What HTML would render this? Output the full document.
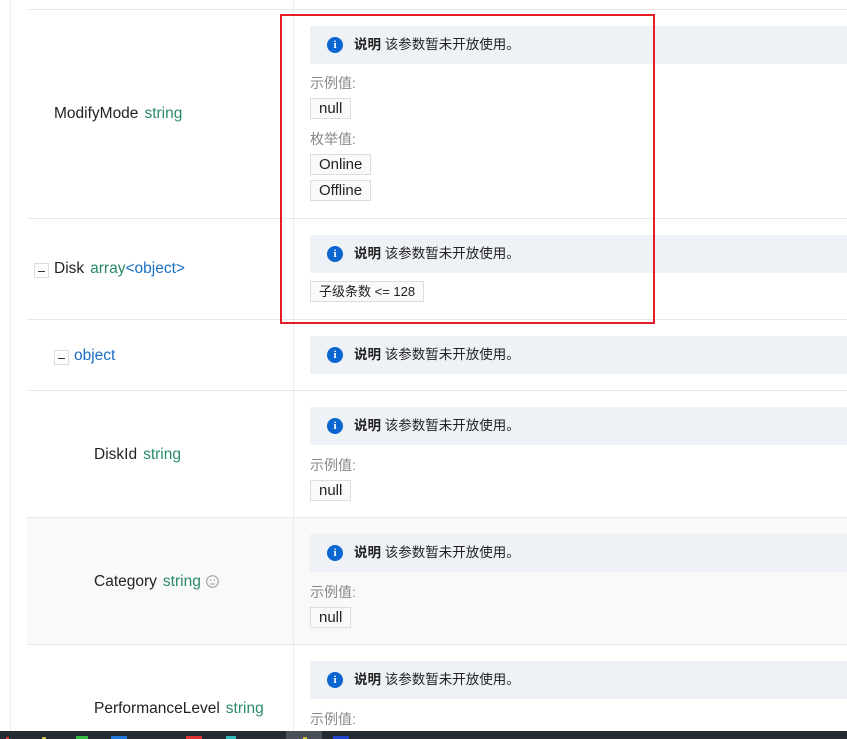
<!DOCTYPE html>
<html><head><meta charset="utf-8">
<style>
*{margin:0;padding:0;box-sizing:border-box}
body{width:847px;height:739px;overflow:hidden;background:#fff;position:relative;font-family:"Liberation Sans","Noto Sans CJK SC",sans-serif;color:#222;font-size:14px}
.a{position:absolute}
.hl{position:absolute;left:27px;right:0;height:1px;background:#e8e8e8}
.info{position:absolute;left:310px;right:0;height:38px;background:#eef1f6;font-size:13.5px;line-height:38px;padding-left:44px}
.info b{font-weight:bold;color:#222}
.info i{position:absolute;left:17px;top:11px;width:16px;height:16px;border-radius:50%;background:#0b66d0;color:#fff;font-style:normal;font-weight:bold;font-size:11px;line-height:16px;text-align:center;font-family:"Liberation Serif",serif}
.lbl{position:absolute;left:310px;font-size:14px;color:#888;line-height:16px}
.tag{position:absolute;left:310px;height:21px;border:1px solid #ddd;background:#fafafa;font-size:15px;line-height:19px;padding:0 8px;color:#222}
.nm{position:absolute;font-size:15.5px;line-height:18px;color:#222}
.nm span{color:#2a8a6a;margin-left:6px}
.nm .b{color:#1a6fc4}
.mb{position:absolute;width:15px;height:15px;border:1px solid #ddd;background:#fff}
.mb:after{content:"";position:absolute;left:3px;right:3px;top:7px;height:1px;background:#333}
</style></head><body>
<div class="a" style="left:10px;top:0;width:1px;height:731px;background:#ececec"></div>
<div class="a" style="left:27px;top:517px;right:0;height:127px;background:#f9f9f9"></div>
<div class="a" style="left:293px;top:0;width:1px;height:731px;background:#ececec"></div>
<div class="hl" style="top:9px"></div>
<div class="hl" style="top:218px"></div>
<div class="hl" style="top:319px"></div>
<div class="hl" style="top:390px"></div>
<div class="hl" style="top:517px"></div>
<div class="hl" style="top:644px"></div>

<div class="info" style="top:26px"><i>i</i><b>说明</b> 该参数暂未开放使用。</div>
<div class="lbl" style="top:75px">示例值:</div>
<div class="tag" style="top:98px">null</div>
<div class="lbl" style="top:131px">枚举值:</div>
<div class="tag" style="top:154px">Online</div>
<div class="tag" style="top:180px">Offline</div>
<div class="nm" style="left:54px;top:105px">ModifyMode<span>string</span></div>

<div class="info" style="top:235px"><i>i</i><b>说明</b> 该参数暂未开放使用。</div>
<div class="tag" style="top:281px;font-size:13px">子级条数 &lt;= 128</div>
<div class="mb" style="left:34px;top:263px"></div>
<div class="nm" style="left:54px;top:260px">Disk<span>array</span><span class="b" style="margin-left:0">&lt;object&gt;</span></div>

<div class="info" style="top:336px"><i>i</i><b>说明</b> 该参数暂未开放使用。</div>
<div class="mb" style="left:54px;top:350px"></div>
<div class="nm" style="left:74px;top:347px;color:#1a6fc4">object</div>

<div class="info" style="top:407px"><i>i</i><b>说明</b> 该参数暂未开放使用。</div>
<div class="lbl" style="top:457px">示例值:</div>
<div class="tag" style="top:480px">null</div>
<div class="nm" style="left:94px;top:446px">DiskId<span>string</span></div>

<div class="info" style="top:534px"><i>i</i><b>说明</b> 该参数暂未开放使用。</div>
<div class="lbl" style="top:584px">示例值:</div>
<div class="tag" style="top:607px">null</div>
<div class="nm" style="left:94px;top:573px">Category<span>string</span></div>
<svg class="a" style="left:206px;top:575px" width="13" height="13" viewBox="0 0 13 13"><circle cx="6.5" cy="6.5" r="5.8" fill="none" stroke="#999" stroke-width="1"/><circle cx="4.6" cy="5" r=".8" fill="#999"/><circle cx="8.4" cy="5" r=".8" fill="#999"/><path d="M4.3 9h4.4" stroke="#999" stroke-width="1"/></svg>

<div class="info" style="top:661px"><i>i</i><b>说明</b> 该参数暂未开放使用。</div>
<div class="lbl" style="top:711px">示例值:</div>
<div class="nm" style="left:94px;top:700px">PerformanceLevel<span>string</span></div>

<div class="a" style="left:280px;top:14px;width:375px;height:310px;border:2px solid #e41e26"></div>

<div class="a" style="left:0;top:731px;width:847px;height:8px;background:#252a33"></div>
<div class="a" style="left:286px;top:731px;width:36px;height:8px;background:#4a4e57"></div>
<div class="a" style="left:6px;top:737px;width:3px;height:2px;background:#d33"></div>
<div class="a" style="left:42px;top:737px;width:4px;height:2px;background:#cb3"></div>
<div class="a" style="left:76px;top:736px;width:12px;height:3px;background:#3b4"></div>
<div class="a" style="left:111px;top:736px;width:16px;height:3px;background:#27d"></div>
<div class="a" style="left:186px;top:736px;width:16px;height:3px;background:#d33"></div>
<div class="a" style="left:226px;top:736px;width:10px;height:3px;background:#3bb"></div>
<div class="a" style="left:303px;top:737px;width:4px;height:2px;background:#cb3"></div>
<div class="a" style="left:333px;top:736px;width:16px;height:3px;background:#24c"></div>
</body></html>
